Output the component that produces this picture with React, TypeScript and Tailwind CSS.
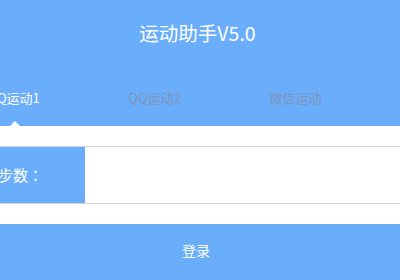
import React from "react";

export default function App() {
  const tabs = [
    { label: "QQ运动1", active: true },
    { label: "QQ运动2", active: false },
    { label: "微信运动", active: false },
  ];
  return (
    <div
      className="w-[400px] h-[280px] overflow-hidden bg-white"
      style={{ fontFamily: '"Noto Sans CJK SC", "Noto Sans", sans-serif' }}
    >
      <div className="relative h-[126px] bg-[#6aaefb] flex flex-col">
        <div className="h-[65px] pr-[5px] flex items-center justify-center text-white text-[19.5px]">
          运动助手V5.0
        </div>
        <div className="overflow-hidden mt-[13px]">
          <div className="flex ml-[-57px] h-[40px] items-center">
            {tabs.map((t) => (
              <div
                key={t.label}
                className={`w-[141px] shrink-0 text-center text-[13px] ${
                  t.active ? "text-white" : "text-[#8094b8]"
                }`}
              >
                {t.label}
              </div>
            ))}
          </div>
        </div>
        <div className="absolute bottom-0 left-[10px] w-0 h-0 border-l-[5px] border-r-[5px] border-b-[5px] border-l-transparent border-r-transparent border-b-white" />
      </div>
      <div className="pt-[20px]">
        <div className="flex h-[58px] border-y border-[#d4d4d4]">
          <div
            className="w-[85px] bg-[#6aaefb] flex items-center text-white text-[15px]"
            style={{ fontFamily: '"Noto Sans CJK JP", sans-serif' }}
          >
            <span className="-ml-[2px]">步数：</span>
          </div>
          <div className="flex-1 bg-white" />
        </div>
      </div>
      <div className="mt-[20px] h-[60px] bg-[#6aaefb] flex items-center justify-center text-white text-[14px] pb-[8px] pr-[8px]">
        登录
      </div>
    </div>
  );
}
